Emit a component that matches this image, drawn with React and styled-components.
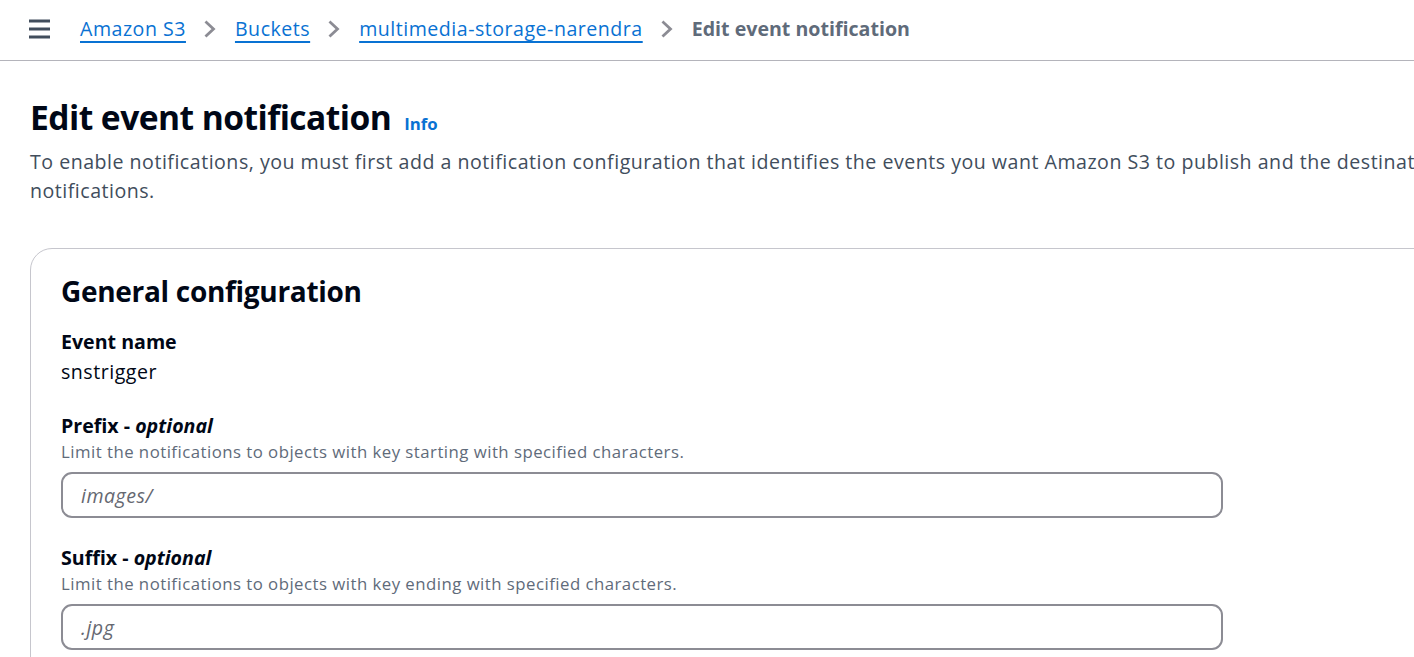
import React from "react";
import styled, { createGlobalStyle } from "styled-components";

const Global = createGlobalStyle`
  html, body { margin: 0; padding: 0; background: #ffffff; overflow: hidden; }
  body { font-family: "Open Sans", "Noto Sans", Arial, sans-serif; color: #000716; }
  * { box-sizing: border-box; }
`;

const Page = styled.div`
  width: 1940px;
  min-height: 657px;
  background: #ffffff;
`;

const TopBar = styled.header`
  height: 61px;
  display: flex;
  align-items: center;
  padding-left: 29px;
  border-bottom: 1px solid #b4b4bb;
  gap: 30px;
`;

const MenuButton = styled.button`
  width: 21px;
  height: 20px;
  padding: 0;
  border: none;
  background: transparent;
  display: flex;
  align-items: center;
  margin-top: -2px;
`;

const Crumbs = styled.nav`
  display: flex;
  align-items: center;
  font-size: 19.6px;
  line-height: 28px;
  margin-top: -2px;
`;

const CrumbLink = styled.a`
  color: #0972d3;
  letter-spacing: 0.5px;
  text-decoration: underline;
  text-decoration-thickness: 2px;
  text-underline-offset: 5px;
  cursor: pointer;
`;

const CrumbCurrent = styled.span`
  color: #5f6b7a;
  font-weight: 700;
`;

const Sep = styled.span`
  display: inline-flex;
  width: 12px;
  margin: 0 19px 0 18px;
`;

const Main = styled.main`
  padding: 35px 30px 0 30px;
`;

const TitleRow = styled.div`
  display: flex;
  align-items: baseline;
  gap: 13px;
`;

const H1 = styled.h1`
  margin: 0;
  font-size: 33.6px;
  line-height: 42px;
  font-weight: 700;
  letter-spacing: -0.55px;
  color: #000716;
`;

const InfoLink = styled.a`
  color: #0972d3;
  font-weight: 700;
  font-size: 16.8px;
  text-decoration: none;
`;

const Desc = styled.p`
  margin: 9px 0 0 0;
  font-size: 19.6px;
  line-height: 29px;
  letter-spacing: 0.5px;
  color: #414d5c;
`;

const Card = styled.section`
  margin-top: 43px;
  border: 1px solid #c6c6cd;
  border-radius: 22px;
  padding: 25px 30px 40px 30px;
  background: #ffffff;
`;

const H2 = styled.h2`
  margin: 0;
  font-size: 28px;
  line-height: 34px;
  font-weight: 700;
  letter-spacing: -0.3px;
  color: #000716;
`;

const Field = styled.div`
  margin-top: ${(p) => p.$gap}px;
`;

const Label = styled.div`
  font-size: 19.6px;
  line-height: 30px;
  font-weight: 700;
  color: #000716;
  em { font-style: italic; }
`;

const Value = styled.div`
  font-size: 19.6px;
  line-height: 30px;
  letter-spacing: 0.5px;
  color: #000716;
`;

const Hint = styled.div`
  font-size: 16.8px;
  line-height: 22px;
  letter-spacing: 0.47px;
  color: #5f6b7a;
`;

const Input = styled.input`
  display: block;
  margin-top: 9px;
  width: 1162px;
  height: 46px;
  border: 2px solid #8c8c94;
  border-radius: 11px;
  padding: 0 18px;
  font-family: inherit;
  font-size: 19.6px;
  letter-spacing: 0.5px;
  color: #000716;
  outline: none;
  &::placeholder { color: #656871; font-style: italic; opacity: 1; }
`;

const Chevron = () => (
  <svg width="12" height="18" viewBox="0 0 12 18">
    <polyline points="2.5,2.5 9.5,9 2.5,15.5" fill="none" stroke="#8c8c94" strokeWidth="2.8" strokeLinecap="square" />
  </svg>
);

const Hamburger = () => (
  <svg width="21" height="20" viewBox="0 0 21 20">
    <g stroke="#414d5c" strokeWidth="3">
      <line x1="0" y1="2" x2="21" y2="2" />
      <line x1="0" y1="10" x2="21" y2="10" />
      <line x1="0" y1="18" x2="21" y2="18" />
    </g>
  </svg>
);

const crumbs = ["Amazon S3", "Buckets", "multimedia-storage-narendra"];

export default function App() {
  return (
    <Page>
      <Global />
      <TopBar>
        <MenuButton aria-label="Open navigation"><Hamburger /></MenuButton>
        <Crumbs>
          {crumbs.map((c) => (
            <React.Fragment key={c}>
              <CrumbLink>{c}</CrumbLink>
              <Sep><Chevron /></Sep>
            </React.Fragment>
          ))}
          <CrumbCurrent>Edit event notification</CrumbCurrent>
        </Crumbs>
      </TopBar>
      <Main>
        <TitleRow>
          <H1>Edit event notification</H1>
          <InfoLink>Info</InfoLink>
        </TitleRow>
        <Desc>
          To enable notifications, you must first add a notification configuration that identifies the events you want Amazon S3 to publish and the destinations where you want Amazon S3 to send the notifications.
        </Desc>
        <Card>
          <H2>General configuration</H2>
          <Field $gap={19}>
            <Label>Event name</Label>
            <Value>snstrigger</Value>
          </Field>
          <Field $gap={24}>
            <Label>Prefix - <em>optional</em></Label>
            <Hint>Limit the notifications to objects with key starting with specified characters.</Hint>
            <Input placeholder="images/" />
          </Field>
          <Field $gap={25}>
            <Label>Suffix - <em>optional</em></Label>
            <Hint>Limit the notifications to objects with key ending with specified characters.</Hint>
            <Input placeholder=".jpg" />
          </Field>
        </Card>
      </Main>
    </Page>
  );
}
